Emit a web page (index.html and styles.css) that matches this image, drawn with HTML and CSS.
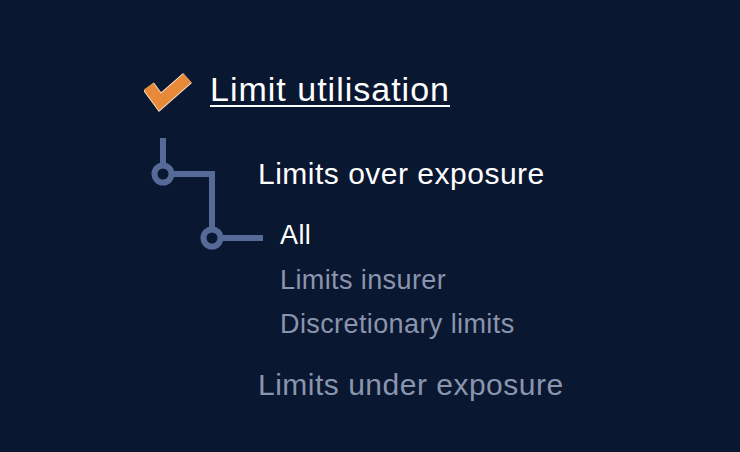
FILE: index.html
```
<!DOCTYPE html>
<html lang="en">
<head>
<meta charset="utf-8">
<title>Limit utilisation</title>
<link rel="stylesheet" href="styles.css">
</head>
<body>
<nav class="menu">
  <div class="menu-head">
    <svg class="check" width="50" height="44" viewBox="0 0 50 44" aria-hidden="true">
      <path d="M4.5 17.5 L16 33 L43.5 9" fill="none" stroke="#f3dcc4" stroke-width="13.5" stroke-linejoin="miter"/>
      <path d="M4.5 17.5 L16 33 L43.5 9" fill="none" stroke="#e8893a" stroke-width="11.5" stroke-linejoin="miter"/>
    </svg>
    <a class="menu-title" href="#">Limit utilisation</a>
  </div>
  <div class="tree">
    <svg class="connector" width="116" height="112" viewBox="0 0 116 112" aria-hidden="true">
      <g fill="none" stroke="#566a97" stroke-width="6">
        <path d="M13 0 V27.5"/>
        <circle cx="13" cy="36" r="8.5"/>
        <path d="M21.5 36 H62 V91.5" stroke-linejoin="miter"/>
        <circle cx="62" cy="100" r="8.5"/>
        <path d="M70.5 100 H113"/>
      </g>
    </svg>
    <div class="branch">
      <div class="group active">Limits over exposure</div>
      <ul class="sub">
        <li class="sub-item active">All</li>
        <li class="sub-item">Limits insurer</li>
        <li class="sub-item">Discretionary limits</li>
      </ul>
    </div>
    <div class="group under">Limits under exposure</div>
  </div>
</nav>
</body>
</html>
```
FILE: styles.css
```
html, body {
  margin: 0;
  padding: 0;
}
body {
  width: 740px;
  height: 452px;
  background: #0a1731;
  font-family: "Liberation Sans", Arial, Helvetica, sans-serif;
  color: #ffffff;
  overflow: hidden;
}
.menu {
  padding: 69px 0 0 144px;
}
.menu-head {
  display: flex;
  align-items: flex-start;
  gap: 16px;
}
.check {
  display: block;
}
.menu-title {
  font-size: 34px;
  line-height: 40px;
  letter-spacing: 1px;
  color: #ffffff;
  text-decoration: underline;
  text-decoration-thickness: 2px;
  text-underline-offset: 4px;
}
.tree {
  display: grid;
  grid-template-columns: 108px auto;
  margin: 26px 0 0 6px;
}
.connector {
  display: block;
  grid-row: 1 / 2;
  margin: -1px -8px 0 0;
}
.branch {
  padding-top: 17px;
}
.group {
  font-size: 30px;
  line-height: 36px;
  letter-spacing: 0.5px;
}
.sub {
  list-style: none;
  margin: 21px 0 0;
  padding: 0 0 0 22px;
}
.sub-item {
  font-size: 27px;
  line-height: 44.5px;
  letter-spacing: 0.4px;
  color: #8a95ad;
}
.active {
  color: #ffffff;
}
.under {
  grid-column: 2;
  margin-top: 20px;
  color: #8a95ad;
}
```
